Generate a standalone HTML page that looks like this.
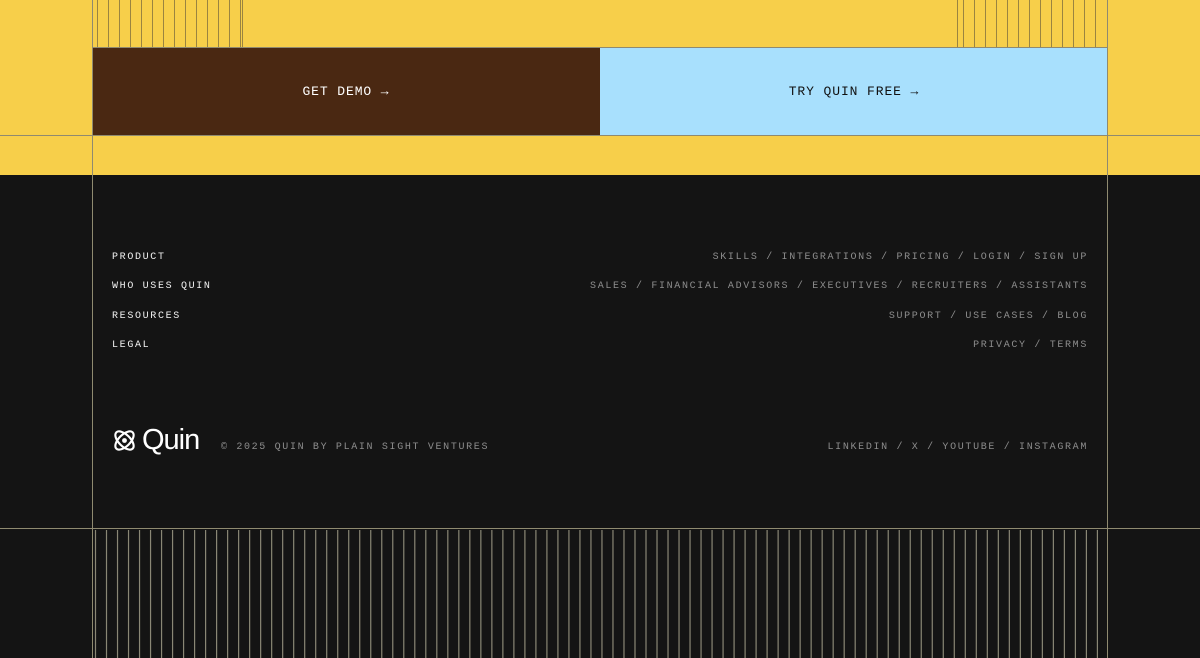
<!DOCTYPE html>
<html><head><meta charset="utf-8"><style>
*{margin:0;padding:0;box-sizing:border-box}
body{width:1200px;height:658px;overflow:hidden;background:#141414;position:relative;font-family:"Liberation Mono",monospace}
.abs{position:absolute}
.t{position:absolute;font-size:10px;letter-spacing:1.66px;white-space:nowrap;line-height:12px}
.g{color:#8d8d8d}
.w{color:#f2f2f2}
.r{right:112px;text-align:right}
</style></head><body>
<div class="abs" style="left:0;top:0;width:1200px;height:175px;background:#f7cf4a"></div>
<svg class="abs" style="left:0;top:0" width="1200" height="658">
<g stroke="#9a8440" stroke-width="1">
<line x1="97.5" y1="0" x2="97.5" y2="47"/><line x1="108.5" y1="0" x2="108.5" y2="47"/><line x1="119.5" y1="0" x2="119.5" y2="47"/><line x1="130.5" y1="0" x2="130.5" y2="47"/><line x1="141.5" y1="0" x2="141.5" y2="47"/><line x1="152.5" y1="0" x2="152.5" y2="47"/><line x1="163.5" y1="0" x2="163.5" y2="47"/><line x1="174.5" y1="0" x2="174.5" y2="47"/><line x1="185.5" y1="0" x2="185.5" y2="47"/><line x1="196.5" y1="0" x2="196.5" y2="47"/><line x1="207.5" y1="0" x2="207.5" y2="47"/><line x1="218.5" y1="0" x2="218.5" y2="47"/><line x1="229.5" y1="0" x2="229.5" y2="47"/><line x1="240.5" y1="0" x2="240.5" y2="47"/><line x1="242.5" y1="0" x2="242.5" y2="47"/>
<line x1="957.5" y1="0" x2="957.5" y2="47"/><line x1="963.5" y1="0" x2="963.5" y2="47"/><line x1="974.5" y1="0" x2="974.5" y2="47"/><line x1="985.5" y1="0" x2="985.5" y2="47"/><line x1="996.5" y1="0" x2="996.5" y2="47"/><line x1="1007.5" y1="0" x2="1007.5" y2="47"/><line x1="1018.5" y1="0" x2="1018.5" y2="47"/><line x1="1029.5" y1="0" x2="1029.5" y2="47"/><line x1="1040.5" y1="0" x2="1040.5" y2="47"/><line x1="1051.5" y1="0" x2="1051.5" y2="47"/><line x1="1062.5" y1="0" x2="1062.5" y2="47"/><line x1="1073.5" y1="0" x2="1073.5" y2="47"/><line x1="1084.5" y1="0" x2="1084.5" y2="47"/><line x1="1095.5" y1="0" x2="1095.5" y2="47"/>
</g>
<rect x="92" y="47" width="508" height="89" fill="#4a2812"/>
<rect x="600" y="47" width="507.5" height="89" fill="#a8e0fd"/>
<g stroke="#8f8a70" stroke-width="1" fill="none">
<line x1="92.5" y1="0" x2="92.5" y2="658"/><line x1="1107.5" y1="0" x2="1107.5" y2="658"/>
<line x1="92" y1="47.5" x2="1108" y2="47.5"/>
<line x1="0" y1="135.5" x2="1200" y2="135.5"/>
<line x1="0" y1="528.5" x2="1200" y2="528.5"/>
</g>
<g id="bs" stroke="#8a8775" stroke-width="1.2"></g>
</svg>
<div class="abs" style="left:92px;top:47px;width:508px;height:89px;display:flex;align-items:center;justify-content:center;color:#fff;font-size:13px;letter-spacing:0.9px">GET DEMO →</div>
<div class="abs" style="left:600px;top:47px;width:508px;height:89px;display:flex;align-items:center;justify-content:center;color:#111;font-size:13px;letter-spacing:0.9px">TRY QUIN FREE →</div>

<div class="t w" style="left:112px;top:252px">PRODUCT</div>
<div class="t w" style="left:112px;top:281px">WHO USES QUIN</div>
<div class="t w" style="left:112px;top:311px">RESOURCES</div>
<div class="t w" style="left:112px;top:340px">LEGAL</div>
<div class="t g r" style="top:252px">SKILLS / INTEGRATIONS / PRICING / LOGIN / SIGN UP</div>
<div class="t g r" style="top:281px">SALES / FINANCIAL ADVISORS / EXECUTIVES / RECRUITERS / ASSISTANTS</div>
<div class="t g r" style="top:311px">SUPPORT / USE CASES / BLOG</div>
<div class="t g r" style="top:340px">PRIVACY / TERMS</div>
<div class="t g r" style="top:442px">LINKEDIN / X / YOUTUBE / INSTAGRAM</div>
<div class="t g" style="left:221px;top:442px">© 2025 QUIN BY PLAIN SIGHT VENTURES</div>

<svg class="abs" style="left:111px;top:427px" width="27" height="27" viewBox="0 0 28 28" fill="none" stroke="#fff" stroke-width="2.2">
<ellipse cx="14" cy="14" rx="12" ry="6" transform="rotate(45 14 14)"/>
<ellipse cx="14" cy="14" rx="12" ry="6" transform="rotate(-45 14 14)"/>
<circle cx="14" cy="14" r="2.5" fill="#fff" stroke="none"/>
</svg>
<div class="abs" style="left:142px;top:421px;color:#fff;font-family:'Liberation Sans',sans-serif;font-size:29px;letter-spacing:-1px;line-height:38px">Quin</div>

<script>
var g=document.getElementById('bs'),s='';
for(var x=95.5;x<1107;x+=11.01){s+='<line x1="'+x+'" y1="530" x2="'+x+'" y2="658"/>';}
g.innerHTML=s;
</script>
</body></html>
